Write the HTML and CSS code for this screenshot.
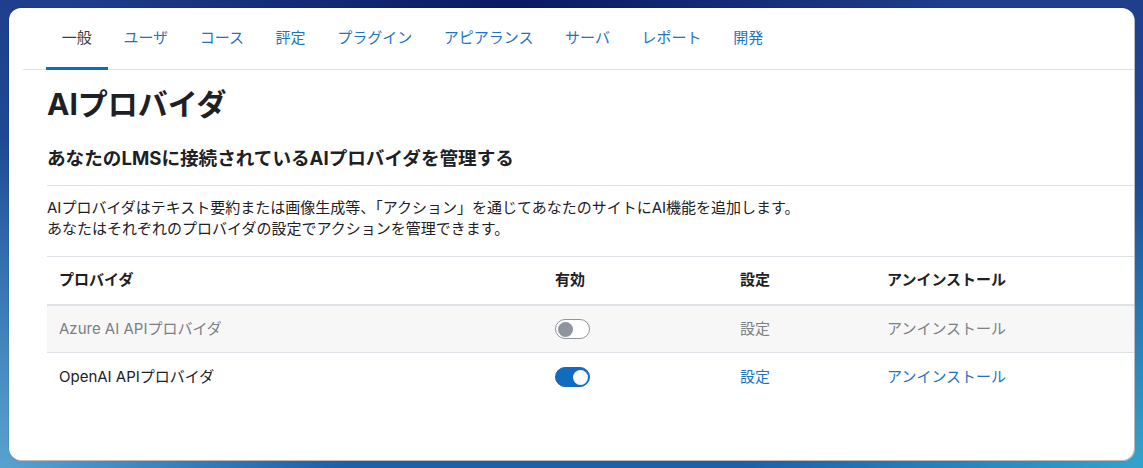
FILE: index.html
```html
<!DOCTYPE html>
<html lang="ja">
<head>
<meta charset="utf-8">
<title>AIプロバイダ</title>
<link rel="stylesheet" href="styles.css">
</head>
<body>
<div class="window">
  <nav class="secondary-nav">
    <ul class="tabs">
      <li><a class="tab active">一般</a></li>
      <li><a class="tab">ユーザ</a></li>
      <li><a class="tab">コース</a></li>
      <li><a class="tab">評定</a></li>
      <li><a class="tab">プラグイン</a></li>
      <li><a class="tab">アピアランス</a></li>
      <li><a class="tab">サーバ</a></li>
      <li><a class="tab">レポート</a></li>
      <li><a class="tab">開発</a></li>
    </ul>
  </nav>
  <main class="content">
    <h2 class="page-title">AIプロバイダ</h2>
    <h3 class="section-title">あなたのLMSに接続されているAIプロバイダを管理する</h3>
    <div class="description">
      <p>AIプロバイダはテキスト要約または画像生成等、「アクション」を通じてあなたのサイトにAI機能を追加します。<br>あなたはそれぞれのプロバイダの設定でアクションを管理できます。</p>
    </div>
    <table class="providers">
      <thead>
        <tr>
          <th class="col-name">プロバイダ</th>
          <th class="col-enable">有効</th>
          <th class="col-settings">設定</th>
          <th class="col-uninstall">アンインストール</th>
        </tr>
      </thead>
      <tbody>
        <tr class="dimmed">
          <td>Azure AI APIプロバイダ</td>
          <td><span class="switch"><span class="knob"></span></span></td>
          <td>設定</td>
          <td>アンインストール</td>
        </tr>
        <tr>
          <td>OpenAI APIプロバイダ</td>
          <td><span class="switch on"><span class="knob"></span></span></td>
          <td><a class="link">設定</a></td>
          <td><a class="link">アンインストール</a></td>
        </tr>
      </tbody>
    </table>
  </main>
</div>
</body>
</html>
```
FILE: styles.css
```css
* { box-sizing: border-box; }

html, body {
  margin: 0;
  height: 468px;
  overflow: hidden;
}

body {
  font-family: "Inter", "Noto Sans CJK JP", sans-serif;
  font-size: 15px;
  line-height: 1.5;
  color: #1d2125;
  padding: 8px 0 0 9px;
  background:
    radial-gradient(ellipse 40% 60% at 45% 0%, #0a1a63 0%, rgba(10,26,99,0) 100%),
    radial-gradient(ellipse 30% 70% at 0% 100%, #58a2cf 0%, rgba(88,162,207,0) 100%),
    radial-gradient(ellipse 35% 60% at 100% 100%, #33a3cc 0%, rgba(51,163,204,0) 100%),
    linear-gradient(180deg, #1f3f8c 0%, #1e5fa6 100%);
}

.window {
  width: 1125px;
  height: 452px;
  background: #fff;
  border-radius: 12px;
  overflow: hidden;
  box-shadow: 1px 1px 0 0 #b8bcc2, 0 0 0 0.5px rgba(0,0,0,0.15);
}

.secondary-nav {
  margin-left: 14px;
  width: 1200px;
  height: 62px;
  border-bottom: 1px solid #dee2e6;
}

.tabs {
  display: flex;
  list-style: none;
  margin: 0;
  padding: 0 0 0 23px;
}

.tab {
  display: flex;
  align-items: center;
  height: 62px;
  padding: 1px 15.8px 0;
  color: #1f74c2;
  border-bottom: 3px solid transparent;
  text-decoration: none;
}

.tab.active {
  color: #3a3f44;
  border-bottom-color: #0f6cbf;
}

.content {
  padding-left: 38px;
  width: 1200px;
}

.page-title {
  margin: 16px 0 0;
  font-size: 30px;
  font-weight: 700;
  line-height: 1.2;
}

.section-title {
  margin: 25px 0 0;
  font-size: 18.6px;
  font-weight: 700;
  line-height: 1.2;
  padding-bottom: 16px;
  border-bottom: 1px solid #dee2e6;
}

.description p {
  margin: 0;
  padding: 11px 0 17px;
  line-height: 21px;
  font-size: 15px;
}

.providers {
  border-collapse: collapse;
  width: 1160px;
}

.providers th,
.providers td {
  text-align: left;
  padding: 12px 12px;
  vertical-align: middle;
  border-top: 1px solid #dee2e6;
  line-height: 22.5px;
}

.providers th {
  font-weight: 700;
  border-bottom: 2px solid #dee2e6;
}

.providers td {
  height: 48px;
}

.col-name { width: 496px; }
.col-enable { width: 185px; }
.col-settings { width: 147px; }

.providers tr.dimmed td {
  background: #f7f7f7;
  color: #7b8086;
  border-top: none;
}

.providers tbody tr + tr td {
  border-top: 1px solid #dee2e6;
}

.link {
  color: #1f74c2;
  text-decoration: none;
}

.switch {
  display: block;
  position: relative;
  width: 35px;
  height: 20px;
  border: 1px solid #8f959e;
  border-radius: 10px;
  background: #fff;
}

.switch .knob {
  position: absolute;
  top: 1.5px;
  left: 1.5px;
  width: 15px;
  height: 15px;
  border-radius: 50%;
  background: #8f959e;
}

.switch.on {
  background: #0f6cbf;
  border-color: #0f6cbf;
}

.switch.on .knob {
  left: auto;
  right: 1.5px;
  background: #fff;
}
```
